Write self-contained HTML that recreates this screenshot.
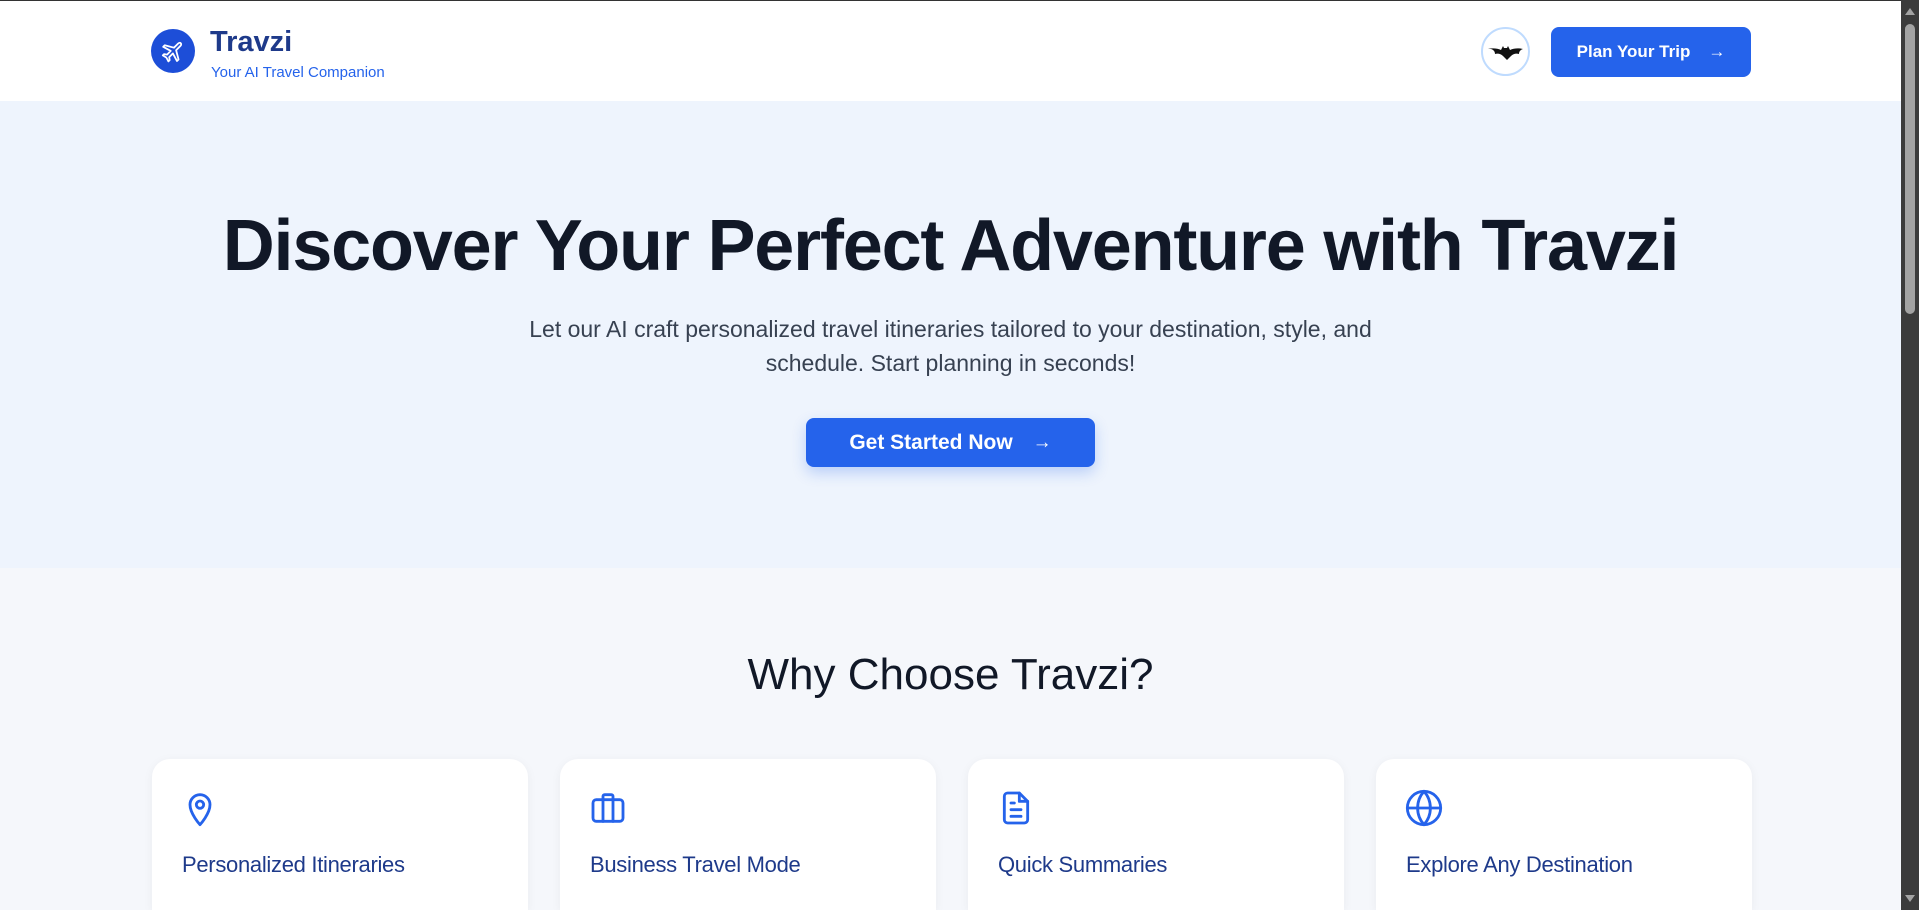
<!DOCTYPE html>
<html><head><meta charset="utf-8"><style>
*{margin:0;padding:0;box-sizing:border-box}
body{width:1919px;height:910px;overflow:hidden;font-family:"Liberation Sans",sans-serif;background:#f5f7fb;position:relative}
.page{position:absolute;left:0;top:0;width:1901px;height:910px;overflow:hidden}
.sb{position:absolute;right:0;top:0;width:18px;height:910px;background:#3b3b3b}
.sb .th{position:absolute;left:4px;top:24px;width:10px;height:290px;background:#a3a3a3;border-radius:5px}
.sb .up{position:absolute;left:4px;top:8px;border-left:5px solid transparent;border-right:5px solid transparent;border-bottom:7px solid #a3a3a3}
.sb .dn{position:absolute;left:4px;bottom:8px;border-left:5px solid transparent;border-right:5px solid transparent;border-top:7px solid #a3a3a3}
header{position:absolute;left:0;top:0;width:1901px;height:101px;background:#fff;border-top:1px solid #333;box-shadow:0 1px 3px rgba(0,0,0,.06)}
.logo{position:absolute;left:151px;top:28px;width:44px;height:44px;border-radius:50%;background:#1d4ed8}
.brand{position:absolute;left:210px;top:25px;font-size:29px;font-weight:bold;color:#1e3a8a}
.sub{position:absolute;left:211px;top:63px;font-size:15px;color:#2563eb}
.av{position:absolute;left:1481px;top:26px;width:49px;height:49px;border-radius:50%;border:2px solid #bfdbfe;background:#fff}
.btn1{position:absolute;left:1551px;top:26px;width:200px;height:50px;border-radius:8px;background:#2563eb;color:#fff;font-size:17px;font-weight:bold;display:flex;align-items:center;justify-content:center;gap:18px}
.hero{position:absolute;left:0;top:101px;width:1901px;height:467px;background:#eef4fd}
h1{position:absolute;left:0;width:1901px;top:205px;text-align:center;font-size:72px;font-weight:bold;color:#111827;letter-spacing:-1.2px}
.p{position:absolute;left:480px;width:941px;top:312px;text-align:center;font-size:23px;line-height:34px;color:#374151}
.btn2{position:absolute;left:806px;top:418px;width:289px;height:49px;border-radius:8px;background:#2563eb;color:#fff;font-size:21px;font-weight:bold;display:flex;align-items:center;justify-content:center;gap:20px;box-shadow:0 6px 14px rgba(37,99,235,.25)}
h2{position:absolute;left:0;width:1901px;top:650px;text-align:center;font-size:44px;font-weight:normal;color:#111827}
.card{position:absolute;top:759px;width:376px;height:151px;background:#fff;border-radius:18px 18px 0 0;box-shadow:0 2px 10px rgba(0,0,0,.05)}
.card svg{position:absolute;left:28px;top:29px}
.card div{position:absolute;left:30px;top:93px;font-size:22px;color:#1e3a8a;letter-spacing:-0.3px}
</style></head><body>
<div class="page">
<header>
<div class="logo"><svg width="44" height="44" viewBox="0 0 24 24"><g transform="translate(12 12) rotate(45) translate(-12 -12)"><path d="M12 4c.8 0 1.2.8 1.2 1.6V10l6 3.5v1.6l-6-1.8v3.8l1.8 1.3v1.3L12 18.8l-3 .7v-1.3l1.8-1.3v-3.8l-6 1.8v-1.6l6-3.5V5.6C10.8 4.8 11.2 4 12 4z" fill="none" stroke="#fff" stroke-width="1.3" stroke-linejoin="round" transform="translate(12 12) scale(.75) translate(-12 -12)"/></g></svg></div>
<div class="brand">Travzi</div>
<div class="sub">Your AI Travel Companion</div>
<div class="av"><svg width="45" height="45" viewBox="0 0 45 45"><path d="M5 20c4-1 9-1 13 1l2-4 1 2h3l1-2 2 4c4-2 9-2 13-1-3 1-4 3-4 5-3-1-6 0-8 2l-4 4-4-4c-2-2-5-3-8-2 0-2-1-4-4-5z" fill="#111"/></svg></div>
<div class="btn1"><span>Plan Your Trip</span><span style="font-weight:normal">→</span></div>
</header>
<div class="hero"></div>
<h1>Discover Your Perfect Adventure with Travzi</h1>
<div class="p">Let our AI craft personalized travel itineraries tailored to your destination, style, and schedule. Start planning in seconds!</div>
<div class="btn2"><span>Get Started Now</span><span style="font-weight:normal;font-size:19px">→</span></div>
<h2>Why Choose Travzi?</h2>
<div class="card" style="left:152px"><svg width="40" height="40" viewBox="0 0 24 24" fill="none" stroke="#2563eb" stroke-width="1.7" stroke-linecap="round" stroke-linejoin="round"><path d="M12 22s-6-6.5-6-12a6 6 0 0 1 12 0c0 5.5-6 12-6 12z"/><circle cx="12" cy="10" r="2.2"/></svg><div>Personalized Itineraries</div></div>
<div class="card" style="left:560px"><svg width="40" height="40" viewBox="0 0 24 24" fill="none" stroke="#2563eb" stroke-width="1.7" stroke-linecap="round" stroke-linejoin="round"><rect x="3" y="7" width="18" height="13" rx="2"/><path d="M9 20V5a1 1 0 0 1 1-1h4a1 1 0 0 1 1 1v15"/></svg><div>Business Travel Mode</div></div>
<div class="card" style="left:968px"><svg width="40" height="40" viewBox="0 0 24 24" fill="none" stroke="#2563eb" stroke-width="1.7" stroke-linecap="round" stroke-linejoin="round"><path d="M14 3H7a2 2 0 0 0-2 2v14a2 2 0 0 0 2 2h10a2 2 0 0 0 2-2V8z"/><path d="M14 3v5h5M9 9h2M9 13h6M9 17h6"/></svg><div>Quick Summaries</div></div>
<div class="card" style="left:1376px"><svg width="40" height="40" viewBox="0 0 24 24" fill="none" stroke="#2563eb" stroke-width="1.7" stroke-linecap="round" stroke-linejoin="round"><circle cx="12" cy="12" r="10"/><path d="M2 12h20M12 2a15 15 0 0 1 0 20a15 15 0 0 1 0-20z"/></svg><div>Explore Any Destination</div></div>
</div>
<div class="sb"><div class="up"></div><div class="th"></div><div class="dn"></div></div>
</body></html>
